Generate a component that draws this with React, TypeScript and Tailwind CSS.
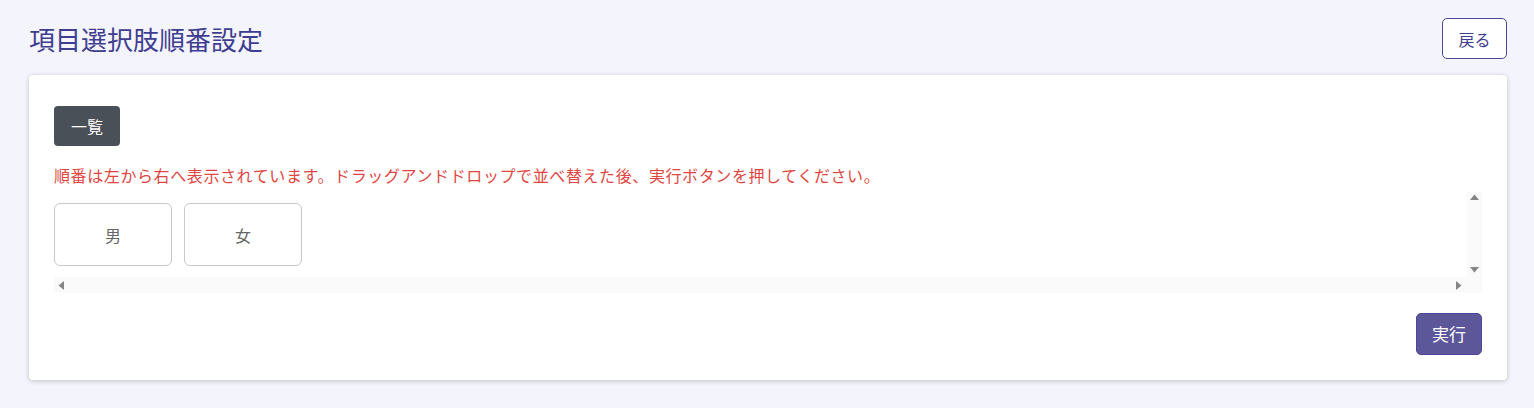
import React from "react";

const font = { fontFamily: '"Noto Sans CJK JP", "Noto Sans", sans-serif' };

function Arrow({ dir }: { dir: "up" | "down" | "left" | "right" }) {
  const pts = {
    up: "0,7 4.5,1.5 9,7",
    down: "0,2 4.5,7.5 9,2",
    left: "7,0 1.5,4.5 7,9",
    right: "2,0 7.5,4.5 2,9",
  }[dir];
  return (
    <svg width="9" height="9" viewBox="0 0 9 9">
      <polygon points={pts} fill="#858585" />
    </svg>
  );
}

export default function App() {
  const items = ["男", "女"];

  return (
    <div
      className="min-h-[408px] bg-[#f4f4fd] pl-[29px] pr-[27px] pt-[18px] pb-[28px]"
      style={font}
    >
      {/* header */}
      <div className="flex items-center justify-between">
        <h1 className="text-[26px] leading-none text-[#3f3d8f]">項目選択肢順番設定</h1>
        <button className="h-[41px] w-[65px] rounded-[5px] border border-[#4b479b] bg-white text-[16px] text-[#3f3d8f]">
          戻る
        </button>
      </div>

      {/* card */}
      <div className="mt-[16px] rounded-[4px] bg-white px-[25px] pt-[31px] pb-[25px] shadow-[0_1px_5px_rgba(0,0,0,0.22)]">
        <button className="h-[40px] w-[66px] rounded-[4px] bg-[#4a5058] text-[16px] text-white">
          一覧
        </button>

        <p className="mt-[18px] text-[16px] leading-[22px] tracking-[0.6px] text-[#e0463f]">
          順番は左から右へ表示されています。ドラッグアンドドロップで並べ替えた後、実行ボタンを押してください。
        </p>

        {/* scroll area with classic scrollbars */}
        <div className="mt-[6px] flex flex-col">
          <div className="flex h-[85px]">
            <div className="flex flex-1 gap-[12px] pt-[11px]">
              {items.map((it) => (
                <div
                  key={it}
                  className="flex h-[63px] w-[118px] shrink-0 items-center justify-center rounded-[6px] border border-[#c8c8c8] text-[16px] text-[#666]"
                >
                  {it}
                </div>
              ))}
            </div>
            <div className="flex w-[15px] flex-col items-center justify-between bg-[#fafafa] pt-[1px] pb-[3px]">
              <Arrow dir="up" />
              <Arrow dir="down" />
            </div>
          </div>
          <div className="flex h-[16px] items-center justify-between bg-[#fafafa] pl-[3px] pr-[19px]">
            <Arrow dir="left" />
            <Arrow dir="right" />
          </div>
        </div>

        <div className="mt-[20px] flex justify-end">
          <button className="h-[42px] w-[66px] rounded-[5px] border border-[#4b479b] bg-[#5c5799] text-[17px] text-white">
            実行
          </button>
        </div>
      </div>
    </div>
  );
}
